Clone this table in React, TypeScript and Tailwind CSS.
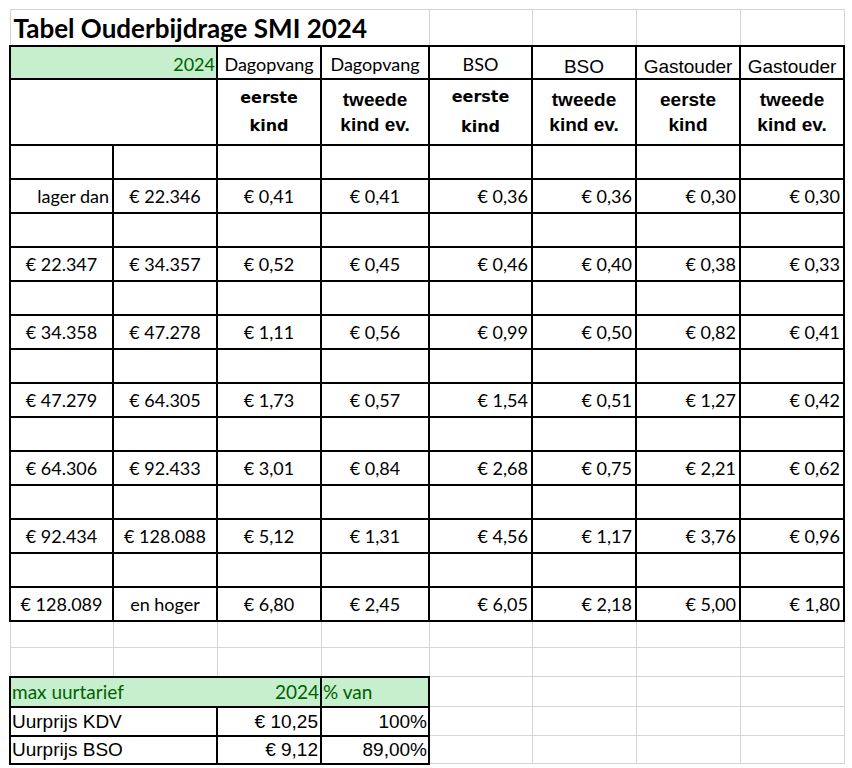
import React from "react";

// Spreadsheet-style tariff table
const grey = "p-0 border border-[#d4d4d4]";
const black = "p-0 border-2 border-black";
const gill = "font-[family-name:Lato,sans-serif] text-[18px] leading-none";
const arialFont = "font-[family-name:'Liberation_Sans',Arial,sans-serif]";
const arial = `${arialFont} leading-none`;
const headBold = `${black} text-center ${arialFont} font-bold text-[19px] leading-[25px]`;
const headVerdana = `${black} text-center font-[family-name:'DejaVu_Sans',sans-serif] font-bold text-[16px]`;

const rows: string[][] = [
    ["lager dan", "€ 22.346", "€ 0,41", "€ 0,41", "€ 0,36", "€ 0,36", "€ 0,30", "€ 0,30"],
    ["€ 22.347", "€ 34.357", "€ 0,52", "€ 0,45", "€ 0,46", "€ 0,40", "€ 0,38", "€ 0,33"],
    ["€ 34.358", "€ 47.278", "€ 1,11", "€ 0,56", "€ 0,99", "€ 0,50", "€ 0,82", "€ 0,41"],
    ["€ 47.279", "€ 64.305", "€ 1,73", "€ 0,57", "€ 1,54", "€ 0,51", "€ 1,27", "€ 0,42"],
    ["€ 64.306", "€ 92.433", "€ 3,01", "€ 0,84", "€ 2,68", "€ 0,75", "€ 2,21", "€ 0,62"],
    ["€ 92.434", "€ 128.088", "€ 5,12", "€ 1,31", "€ 4,56", "€ 1,17", "€ 3,76", "€ 0,96"],
    ["€ 128.089", "en hoger", "€ 6,80", "€ 2,45", "€ 6,05", "€ 2,18", "€ 5,00", "€ 1,80"],
];

const colWidths = [103, 104, 104, 108, 103, 104, 104, 104];

function BlankRow({ h }: { h: string }) {
    return (
        <tr className={h}>
            {colWidths.map((_, i) => (
                <td key={i} className={black}></td>
            ))}
        </tr>
    );
}

function GreyRow({ h }: { h: string }) {
    return (
        <tr className={h}>
            {colWidths.map((_, i) => (
                <td key={i} className={grey}></td>
            ))}
        </tr>
    );
}

export default function App() {
    return (
        <div className="min-h-[768px] bg-white pl-[9px] pt-[9px]">
            <table className="table-fixed border-collapse w-[835px] text-black">
                <colgroup>
                    {colWidths.map((w, i) => (
                        <col key={i} style={{ width: w }} />
                    ))}
                </colgroup>
                <tbody>
                    {/* title */}
                    <tr className="h-[36px]">
                        <td colSpan={4} className={`${grey} pl-[3px] pt-[2px] font-[family-name:Lato,sans-serif] text-[26px] leading-none font-bold whitespace-nowrap`}>
                            Tabel Ouderbijdrage SMI 2024
                        </td>
                        <td className={grey}></td>
                        <td className={grey}></td>
                        <td className={grey}></td>
                        <td className={grey}></td>
                    </tr>

                    {/* product header */}
                    <tr className="h-[33px]">
                        <td colSpan={2} className={`${black} bg-[#c6efce] text-[#006100] text-right pr-[1px] pt-[4px] ${gill}`}>
                            2024
                        </td>
                        <td className={`${black} text-center pt-[4px] ${gill}`}>Dagopvang</td>
                        <td className={`${black} text-center pt-[4px] ${gill}`}>Dagopvang</td>
                        <td className={`${black} text-center pt-[4px] ${gill}`}>BSO</td>
                        <td className={`${black} text-center pt-[8px] ${arial} text-[19px]`}>BSO</td>
                        <td className={`${black} text-center pt-[8px] ${arial} text-[19px]`}>Gastouder</td>
                        <td className={`${black} text-center pt-[8px] ${arial} text-[19px]`}>Gastouder</td>
                    </tr>

                    {/* child header */}
                    <tr className="h-[66px]">
                        <td colSpan={2} className={black}></td>
                        <td className={`${headVerdana} leading-[28px]`}>
                            eerste<br />kind
                        </td>
                        <td className={headBold}>
                            tweede<br />kind ev.
                        </td>
                        <td className={`${headVerdana} leading-[30px]`}>
                            eerste<br />kind
                        </td>
                        <td className={headBold}>
                            tweede<br />kind ev.
                        </td>
                        <td className={headBold}>
                            eerste<br />kind
                        </td>
                        <td className={headBold}>
                            tweede<br />kind ev.
                        </td>
                    </tr>

                    {rows.map((r, ri) => (
                        <React.Fragment key={ri}>
                            <BlankRow h="h-[34px]" />
                            <tr className="h-[34px]">
                                {r.map((v, ci) => {
                                    const align = ci >= 4 || (ri === 0 && ci === 0) ? "text-right pr-[3px]" : "text-center";
                                    return (
                                        <td key={ci} className={`${black} ${gill} ${align} whitespace-nowrap`}>
                                            {v}
                                        </td>
                                    );
                                })}
                            </tr>
                        </React.Fragment>
                    ))}

                    <GreyRow h="h-[27px]" />
                    <GreyRow h="h-[29px]" />

                    {/* max uurtarief */}
                    <tr className="h-[30px]">
                        <td colSpan={3} className={`${black} bg-[#c6efce] text-[#006100] font-[family-name:Lato,sans-serif] text-[19px] leading-none px-[1px]`}>
                            <div className="flex justify-between">
                                <span>max uurtarief</span>
                                <span>2024</span>
                            </div>
                        </td>
                        <td className={`${black} bg-[#c6efce] text-[#006100] font-[family-name:Lato,sans-serif] text-[19px] leading-none pl-[1px]`}>% van</td>
                        <td className={grey}></td>
                        <td className={grey}></td>
                        <td className={grey}></td>
                        <td className={grey}></td>
                    </tr>
                    <tr className="h-[29px]">
                        <td colSpan={2} className={`${black} ${arial} text-[19px] pl-[1px]`}>Uurprijs KDV</td>
                        <td className={`${black} ${arial} text-[19px] text-right pr-[2px]`}>€ 10,25</td>
                        <td className={`${black} ${arial} text-[19px] text-right pr-[1px]`}>100%</td>
                        <td className={grey}></td>
                        <td className={grey}></td>
                        <td className={grey}></td>
                        <td className={grey}></td>
                    </tr>
                    <tr className="h-[28px]">
                        <td colSpan={2} className={`${black} ${arial} text-[19px] pl-[1px]`}>Uurprijs BSO</td>
                        <td className={`${black} ${arial} text-[19px] text-right pr-[2px]`}>€ 9,12</td>
                        <td className={`${black} ${arial} text-[19px] text-right pr-[1px]`}>89,00%</td>
                        <td className={grey}></td>
                        <td className={grey}></td>
                        <td className={grey}></td>
                        <td className={grey}></td>
                    </tr>
                </tbody>
            </table>
        </div>
    );
}
